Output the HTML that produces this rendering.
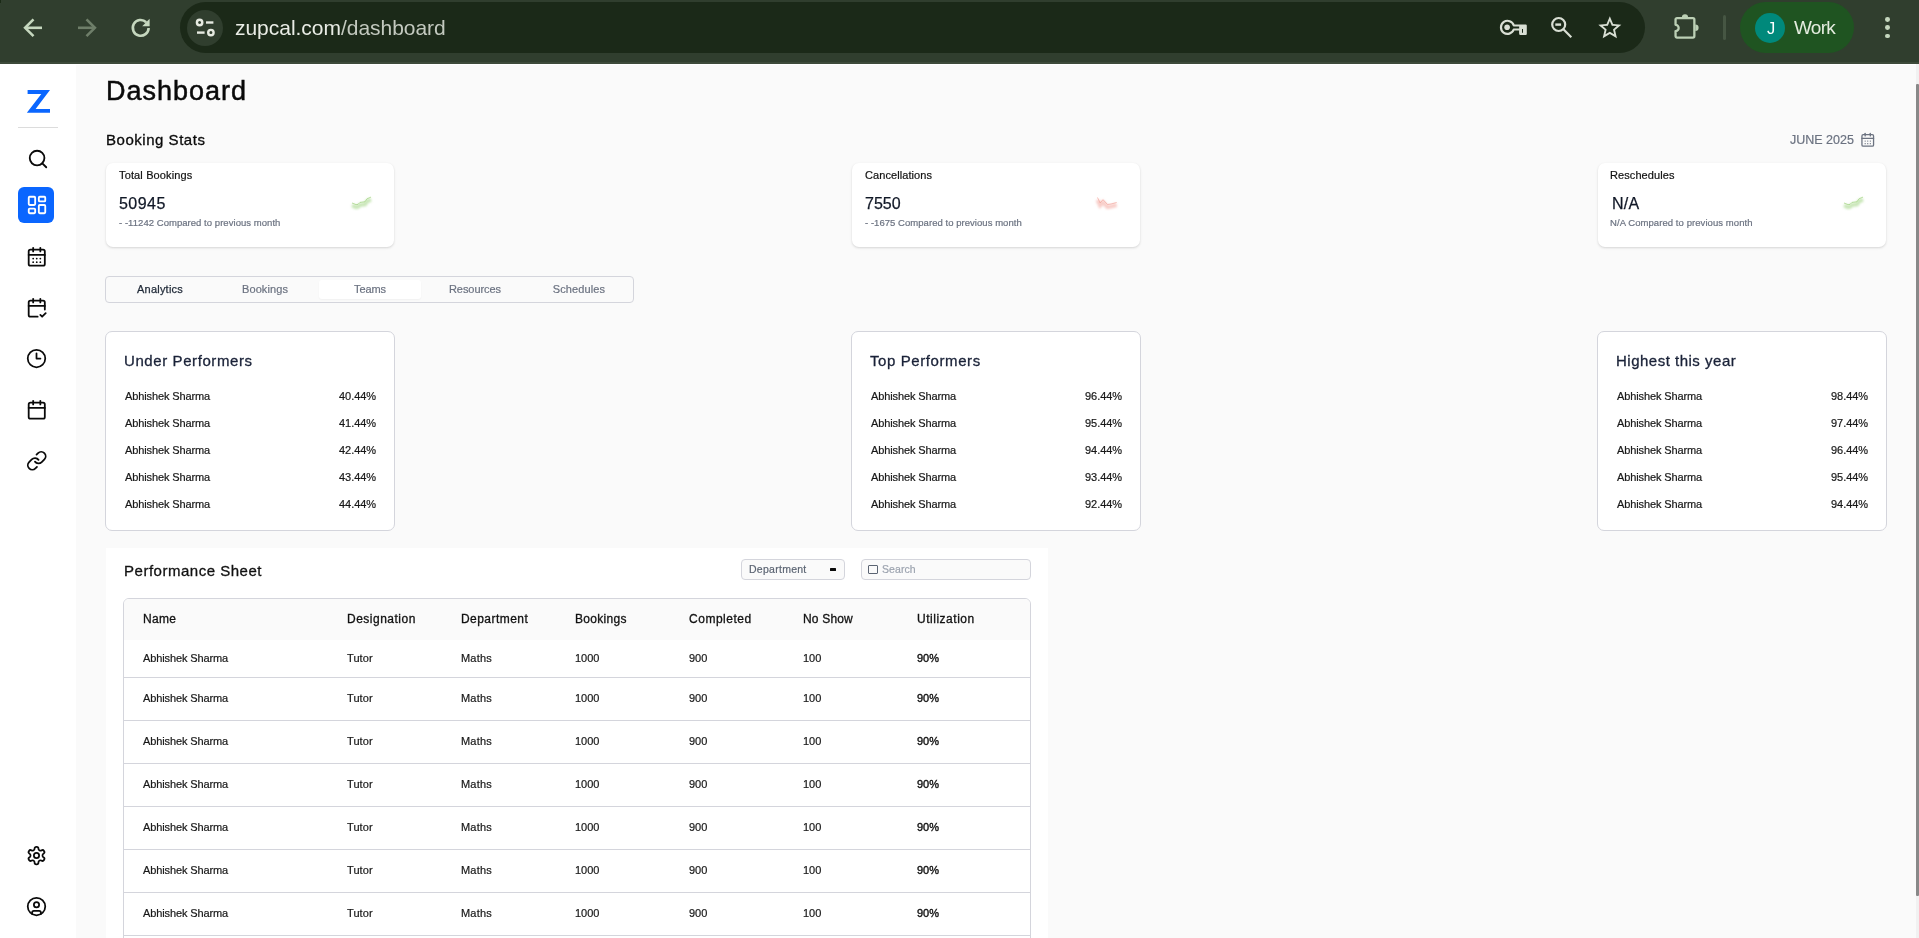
<!DOCTYPE html>
<html><head><meta charset="utf-8"><title>Dashboard</title>
<style>
html,body{margin:0;padding:0;}
body{width:1919px;height:938px;overflow:hidden;position:relative;background:#fafafa;font-family:"Liberation Sans",sans-serif;}
.b{position:absolute;box-sizing:border-box;}
.t{position:absolute;white-space:pre;font-family:"Liberation Sans",sans-serif;will-change:transform;}
</style></head><body>
<div class="b" style="left:0px;top:0px;width:1919px;height:64px;background:#303e2e"></div>
<div class="b" style="left:0px;top:62px;width:1919px;height:2px;background:#3d4a3a"></div>
<div class="b" style="left:0px;top:0px;width:1px;height:3px;background:#1a2a16"></div>
<div class="b" style="left:180px;top:2px;width:1465px;height:50.5px;background:#1b2918;border-radius:26px"></div>
<div class="b" style="left:187.4px;top:9.6px;width:36px;height:36px;background:#303e2e;border-radius:50%"></div>
<svg class="b" style="left:0;top:0" width="1919" height="64" viewBox="0 0 1919 64" fill="none" stroke-linecap="round" stroke-linejoin="round">
<!-- back -->
<g stroke="#c5d7be" stroke-width="2.6" stroke-linecap="butt" stroke-linejoin="miter">
<path d="M42 27.8H26.4"/><path d="M33.5 19.4L25.1 27.8L33.5 36.2"/>
</g>
<!-- forward -->
<g stroke="#6e7e69" stroke-width="2.6" stroke-linecap="butt" stroke-linejoin="miter">
<path d="M78 27.8H93.6"/><path d="M86.5 19.4L94.9 27.8L86.5 36.2"/>
</g>
<!-- reload -->
<g stroke="#c5d7be" stroke-width="2.6" stroke-linecap="butt">
<path d="M148.6 27.9A7.9 7.9 0 1 1 146.2 22.2"/>
</g>
<path d="M149.6 18.8V26.2H142.2Z" fill="#c5d7be"/>
<!-- site info (tune) -->
<g stroke="#e6eae1" stroke-width="2.4">
<circle cx="199.6" cy="22.5" r="2.7"/><path d="M206 22.5H213.4" stroke-linecap="butt"/>
<path d="M197 32.6H204.6" stroke-linecap="butt"/><circle cx="210.9" cy="32.6" r="2.7"/>
</g>
</svg>
<div class="t" style="left:235.00px;top:12px;font-size:21px;line-height:31px;color:#e9ece5;letter-spacing:-0.03px;"><span style="color:#e9ece5">zupcal.com</span><span style="color:#c3c9bf">/dashboard</span></div>
<svg class="b" style="left:0;top:0" width="1919" height="64" viewBox="0 0 1919 64" fill="none" stroke="#d9dfd4" stroke-width="2.2">
<!-- key -->
<path d="M1513.8 25.5H1525.7V33.9H1520.3V29.5H1513.7A6.55 6.55 0 1 1 1513.8 25.5Z" stroke-linejoin="round"/>
<rect x="1523" y="26" width="2.7" height="7.5" fill="#d9dfd4" stroke="none"/>
<rect x="1519.4" y="26" width="2.6" height="7.5" fill="#d9dfd4" stroke="none"/>
<rect x="1519.4" y="26" width="6" height="3" fill="#d9dfd4" stroke="none"/>
<circle cx="1507.1" cy="27.3" r="2.8" fill="#d9dfd4" stroke="none"/>
<!-- zoom out -->
<circle cx="1558.7" cy="24.5" r="6.5"/><path d="M1563.4 29.3L1571.3 37.2"/><path d="M1555.3 24.6H1561.1" stroke-width="2.4"/>
</svg>
<svg class="b" style="left:1595.7px;top:13.7px" width="27.65" height="27.65" viewBox="0 0 24 24" fill="#d9dfd4"><path d="M22 9.24l-7.19-.62L12 2 9.19 8.63 2 9.24l5.46 4.73L5.82 21 12 17.27 18.18 21l-1.63-7.03L22 9.24zM12 15.4l-3.76 2.27 1-4.28-3.32-2.88 4.38-.38L12 6.1l1.71 4.04 4.38.38-3.32 2.88 1 4.28L12 15.4z"/></svg>
<svg class="b" style="left:0;top:0" width="1919" height="64" viewBox="0 0 1919 64" fill="none" stroke="#bcd0b5" stroke-width="2.3" stroke-linejoin="round">
<path d="M1677 18.15H1692.9A1.45 1.45 0 0 1 1694.35 19.6V36.1A1.45 1.45 0 0 1 1692.9 37.55H1677A1.45 1.45 0 0 1 1675.55 36.1V31.05A3.1 3.1 0 0 0 1675.55 24.85V19.6A1.45 1.45 0 0 1 1677 18.15Z"/>
<path d="M1681.9 17.4A3.1 3.1 0 0 1 1688.1 17.4Z" fill="#bcd0b5" stroke="none"/>
<path d="M1695.3 24.5A3.3 3.3 0 0 1 1695.3 31.1Z" fill="#bcd0b5" stroke="none"/>
</svg>
<div class="b" style="left:1723.3px;top:15.2px;width:3.2px;height:24.6px;background:#465643;border-radius:2px"></div>
<div class="b" style="left:1740px;top:2px;width:114px;height:50.6px;background:#1f5421;border-radius:26px"></div>
<div class="b" style="left:1755px;top:12.8px;width:30px;height:30px;background:#00897b;border-radius:50%"></div>
<div class="t" style="left:1620.60px;width:300px;text-align:center;top:15px;font-size:16.5px;line-height:26px;color:#ffffff;">J</div>
<div class="t" style="left:1794.20px;top:13px;font-size:19px;line-height:29px;color:#e4ecdf;letter-spacing:-0.75px;">Work</div>
<div class="b" style="left:1885.1px;top:17.3px;width:4.8px;height:4.8px;background:#c5d7be;border-radius:50%"></div>
<div class="b" style="left:1885.1px;top:25.400000000000002px;width:4.8px;height:4.8px;background:#c5d7be;border-radius:50%"></div>
<div class="b" style="left:1885.1px;top:33.5px;width:4.8px;height:4.8px;background:#c5d7be;border-radius:50%"></div>
<div class="b" style="left:0px;top:64px;width:76px;height:874px;background:#ffffff"></div>
<div class="b" style="left:76px;top:64px;width:1843px;height:1px;background:#ffffff"></div>
<svg class="b" style="left:0;top:64px" width="76" height="80" viewBox="0 64 76 80"><polygon points="27.6,90.1 50,90.1 35.6,109 50,109 50,112.8 26.85,112.8 41.3,94.1 27.6,94.1" fill="#0a66ff"/></svg>
<div class="b" style="left:18px;top:127px;width:40px;height:1px;background:#dcdcdc"></div>
<svg class="b" style="left:27.40px;top:148.00px" width="22" height="22" viewBox="0 0 24 24" fill="none" stroke="#0a0a0a" stroke-width="2" stroke-linecap="round" stroke-linejoin="round"><circle cx="11" cy="11" r="8"/><path d="m21 21-4.3-4.3"/></svg>
<div class="b" style="left:18px;top:187.4px;width:36px;height:35.4px;background:#0a66ff;border-radius:6px"></div>
<svg class="b" style="left:25.70px;top:194.30px" width="22" height="22" viewBox="0 0 24 24" fill="none" stroke="#ffffff" stroke-width="2" stroke-linecap="round" stroke-linejoin="round"><rect width="7" height="9" x="3" y="3" rx="1"/><rect width="7" height="5" x="14" y="3" rx="1"/><rect width="7" height="9" x="14" y="12" rx="1"/><rect width="7" height="5" x="3" y="16" rx="1"/></svg>
<svg class="b" style="left:25.75px;top:246.05px" width="21.5" height="21.5" viewBox="0 0 24 24" fill="none" stroke="#0a0a0a" stroke-width="2" stroke-linecap="round" stroke-linejoin="round"><path d="M8 2v4"/><path d="M16 2v4"/><rect width="18" height="18" x="3" y="4" rx="2"/><path d="M3 10h18"/><path d="M8 14h.01"/><path d="M12 14h.01"/><path d="M16 14h.01"/><path d="M8 18h.01"/><path d="M12 18h.01"/><path d="M16 18h.01"/></svg>
<svg class="b" style="left:25.85px;top:297.15px" width="21.5" height="21.5" viewBox="0 0 24 24" fill="none" stroke="#0a0a0a" stroke-width="2" stroke-linecap="round" stroke-linejoin="round"><path d="M8 2v4"/><path d="M16 2v4"/><path d="M21 14V6a2 2 0 0 0-2-2H5a2 2 0 0 0-2 2v14a2 2 0 0 0 2 2h8"/><path d="M3 10h18"/><path d="m16 20 2 2 4-4"/></svg>
<svg class="b" style="left:25.90px;top:347.80px" width="21" height="21" viewBox="0 0 24 24" fill="none" stroke="#0a0a0a" stroke-width="2" stroke-linecap="round" stroke-linejoin="round"><circle cx="12" cy="12" r="10"/><polyline points="12 6 12 12 16.5 12"/></svg>
<svg class="b" style="left:25.75px;top:398.95px" width="21.5" height="21.5" viewBox="0 0 24 24" fill="none" stroke="#0a0a0a" stroke-width="2" stroke-linecap="round" stroke-linejoin="round"><path d="M8 2v4"/><path d="M16 2v4"/><rect width="18" height="18" x="3" y="4" rx="2"/><path d="M3 10h18"/></svg>
<svg class="b" style="left:25.85px;top:449.85px" width="21.5" height="21.5" viewBox="0 0 24 24" fill="none" stroke="#0a0a0a" stroke-width="2" stroke-linecap="round" stroke-linejoin="round"><path d="M10 13a5 5 0 0 0 7.54.54l3-3a5 5 0 0 0-7.07-7.07l-1.72 1.71"/><path d="M14 11a5 5 0 0 0-7.54-.54l-3 3a5 5 0 0 0 7.07 7.07l1.71-1.71"/></svg>
<svg class="b" style="left:25.90px;top:845.00px" width="21" height="21" viewBox="0 0 24 24" fill="none" stroke="#0a0a0a" stroke-width="2" stroke-linecap="round" stroke-linejoin="round"><path d="M12.22 2h-.44a2 2 0 0 0-2 2v.18a2 2 0 0 1-1 1.73l-.43.25a2 2 0 0 1-2 0l-.15-.08a2 2 0 0 0-2.73.73l-.22.38a2 2 0 0 0 .73 2.73l.15.1a2 2 0 0 1 1 1.72v.51a2 2 0 0 1-1 1.74l-.15.09a2 2 0 0 0-.73 2.73l.22.38a2 2 0 0 0 2.73.73l.15-.08a2 2 0 0 1 2 0l.43.25a2 2 0 0 1 1 1.73V20a2 2 0 0 0 2 2h.44a2 2 0 0 0 2-2v-.18a2 2 0 0 1 1-1.73l.43-.25a2 2 0 0 1 2 0l.15.08a2 2 0 0 0 2.73-.73l.22-.39a2 2 0 0 0-.73-2.73l-.15-.08a2 2 0 0 1-1-1.74v-.5a2 2 0 0 1 1-1.74l.15-.09a2 2 0 0 0 .73-2.73l-.22-.38a2 2 0 0 0-2.73-.73l-.15.08a2 2 0 0 1-2 0l-.43-.25a2 2 0 0 1-1-1.73V4a2 2 0 0 0-2-2z"/><circle cx="12" cy="12" r="3"/></svg>
<svg class="b" style="left:26.00px;top:895.90px" width="21" height="21" viewBox="0 0 24 24" fill="none" stroke="#0a0a0a" stroke-width="2" stroke-linecap="round" stroke-linejoin="round"><circle cx="12" cy="12" r="10"/><circle cx="12" cy="10" r="3"/><path d="M7 20.662V19a2 2 0 0 1 2-2h6a2 2 0 0 1 2 2v1.662"/></svg>
<div class="t" style="left:106.20px;top:72px;font-size:27px;line-height:38px;color:#0a0a0a;letter-spacing:1.0px;-webkit-text-stroke:0.5px #0a0a0a;">Dashboard</div>
<div class="t" style="left:106.30px;top:127px;font-size:15px;line-height:25px;color:#0a0a0a;letter-spacing:0.53px;-webkit-text-stroke:0.3px #0a0a0a;">Booking Stats</div>
<div class="t" style="left:1790.00px;top:129px;font-size:12.5px;line-height:22px;color:#6b7280;-webkit-text-stroke:0.2px #6b7280;">JUNE 2025</div>
<svg class="b" style="left:1859.55px;top:131.55px" width="15.5" height="15.5" viewBox="0 0 24 24" fill="none" stroke="#6b7280" stroke-width="2" stroke-linecap="round" stroke-linejoin="round"><path d="M8 2v4"/><path d="M16 2v4"/><rect width="18" height="18" x="3" y="4" rx="2"/><path d="M3 10h18"/><path d="M8 14h.01"/><path d="M12 14h.01"/><path d="M16 14h.01"/><path d="M8 18h.01"/><path d="M12 18h.01"/><path d="M16 18h.01"/></svg>
<div class="b" style="left:106px;top:163px;width:288px;height:84px;background:#fff;border-radius:7px;box-shadow:0 1px 3px rgba(0,0,0,0.10),0 1px 2px rgba(0,0,0,0.06)"></div>
<div class="t" style="left:118.60px;top:165px;font-size:11px;line-height:20px;color:#111;letter-spacing:0.14px;-webkit-text-stroke:0.2px #111;">Total Bookings</div>
<div class="t" style="left:118.60px;top:191px;font-size:16px;line-height:25px;color:#111827;letter-spacing:0.45px;-webkit-text-stroke:0.25px #111827;">50945</div>
<div class="t" style="left:118.60px;top:213px;font-size:9.5px;line-height:19px;color:#6b7280;letter-spacing:0.045px;-webkit-text-stroke:0.2px #6b7280;">- -11242 Compared to previous month</div>
<div class="b" style="left:852px;top:163px;width:288px;height:84px;background:#fff;border-radius:7px;box-shadow:0 1px 3px rgba(0,0,0,0.10),0 1px 2px rgba(0,0,0,0.06)"></div>
<div class="t" style="left:864.60px;top:165px;font-size:11px;line-height:20px;color:#111;letter-spacing:0.08px;-webkit-text-stroke:0.2px #111;">Cancellations</div>
<div class="t" style="left:864.60px;top:191px;font-size:16px;line-height:25px;color:#111827;-webkit-text-stroke:0.25px #111827;">7550</div>
<div class="t" style="left:864.60px;top:213px;font-size:9.5px;line-height:19px;color:#6b7280;letter-spacing:0.045px;-webkit-text-stroke:0.2px #6b7280;">- -1675 Compared to previous month</div>
<div class="b" style="left:1598px;top:163px;width:288px;height:84px;background:#fff;border-radius:7px;box-shadow:0 1px 3px rgba(0,0,0,0.10),0 1px 2px rgba(0,0,0,0.06)"></div>
<div class="t" style="left:1610.20px;top:165px;font-size:11px;line-height:20px;color:#111;letter-spacing:0.08px;-webkit-text-stroke:0.2px #111;">Reschedules</div>
<div class="t" style="left:1612.40px;top:191px;font-size:16px;line-height:25px;color:#111827;letter-spacing:0.2px;-webkit-text-stroke:0.25px #111827;">N/A</div>
<div class="t" style="left:1609.90px;top:213px;font-size:9.5px;line-height:19px;color:#6b7280;letter-spacing:0.07px;-webkit-text-stroke:0.2px #6b7280;">N/A Compared to previous month</div>
<svg class="b" style="left:342px;top:188px;overflow:visible" width="50" height="40" viewBox="342 188 50 40"><defs><filter id="bl352" x="-50%" y="-50%" width="200%" height="200%"><feGaussianBlur stdDeviation="1.3"/></filter></defs><polyline points="352.0,203.0 356.0,204.6 358.0,204.4 360.0,202.4 365.0,201.8 367.0,198.8 371.0,197.1" fill="none" stroke="#9fd37f" stroke-width="4" stroke-opacity="0.55" filter="url(#bl352)" transform="translate(0,2.5)"/><polyline points="352.0,203.0 356.0,204.6 358.0,204.4 360.0,202.4 365.0,201.8 367.0,198.8 371.0,197.1" fill="none" stroke="#9fd37f" stroke-width="1" stroke-opacity="0.7"/></svg>
<svg class="b" style="left:1088px;top:186px;overflow:visible" width="50" height="40" viewBox="1088 186 50 40"><defs><filter id="bl1098" x="-50%" y="-50%" width="200%" height="200%"><feGaussianBlur stdDeviation="1.3"/></filter></defs><polyline points="1097.5,197.5 1100.1,203.0 1103.0,199.7 1107.5,204.5 1111.0,204.0 1116.7,202.5" fill="none" stroke="#f2a59d" stroke-width="4" stroke-opacity="0.55" filter="url(#bl1098)" transform="translate(0,2.5)"/><polyline points="1097.5,197.5 1100.1,203.0 1103.0,199.7 1107.5,204.5 1111.0,204.0 1116.7,202.5" fill="none" stroke="#f2a59d" stroke-width="1" stroke-opacity="0.7"/></svg>
<svg class="b" style="left:1834px;top:188px;overflow:visible" width="50" height="40" viewBox="1834 188 50 40"><defs><filter id="bl1844" x="-50%" y="-50%" width="200%" height="200%"><feGaussianBlur stdDeviation="1.3"/></filter></defs><polyline points="1844.0,203.0 1848.0,204.6 1850.0,204.4 1852.0,202.4 1857.0,201.8 1859.0,198.8 1863.0,197.1" fill="none" stroke="#9fd37f" stroke-width="4" stroke-opacity="0.55" filter="url(#bl1844)" transform="translate(0,2.5)"/><polyline points="1844.0,203.0 1848.0,204.6 1850.0,204.4 1852.0,202.4 1857.0,201.8 1859.0,198.8 1863.0,197.1" fill="none" stroke="#9fd37f" stroke-width="1" stroke-opacity="0.7"/></svg>
<div class="b" style="left:105px;top:276px;width:529px;height:27px;border:1px solid #d4d5dc;border-radius:4px;background:#fafafa"></div>
<div class="b" style="left:319px;top:280px;width:102px;height:19px;background:#fff;border-radius:3px;box-shadow:0 1px 2px rgba(0,0,0,0.04)"></div>
<div class="t" style="left:10.20px;width:300px;text-align:center;top:279px;font-size:11px;line-height:20px;color:#1f2937;letter-spacing:0.22px;-webkit-text-stroke:0.25px #1f2937;">Analytics</div>
<div class="t" style="left:114.90px;width:300px;text-align:center;top:279px;font-size:11px;line-height:20px;color:#6b7280;letter-spacing:0.09px;-webkit-text-stroke:0.2px #6b7280;">Bookings</div>
<div class="t" style="left:220.00px;width:300px;text-align:center;top:279px;font-size:11px;line-height:20px;color:#6b7280;letter-spacing:-0.08px;-webkit-text-stroke:0.2px #6b7280;">Teams</div>
<div class="t" style="left:324.70px;width:300px;text-align:center;top:279px;font-size:11px;line-height:20px;color:#6b7280;letter-spacing:-0.06px;-webkit-text-stroke:0.2px #6b7280;">Resources</div>
<div class="t" style="left:429.40px;width:300px;text-align:center;top:279px;font-size:11px;line-height:20px;color:#6b7280;letter-spacing:0.12px;-webkit-text-stroke:0.2px #6b7280;">Schedules</div>
<div class="b" style="left:105px;top:331px;width:290px;height:200px;border:1px solid #d4d5dc;border-radius:7px;background:#fff"></div>
<div class="t" style="left:123.70px;top:348px;font-size:15px;line-height:25px;color:#1a2238;letter-spacing:0.59px;-webkit-text-stroke:0.3px #1a2238;">Under Performers</div>
<div class="t" style="left:124.50px;top:386px;font-size:11px;line-height:20px;color:#171717;letter-spacing:-0.12px;-webkit-text-stroke:0.2px #171717;">Abhishek Sharma</div>
<div class="t" style="right:1543.20px;top:386px;font-size:11px;line-height:20px;color:#171717;letter-spacing:-0.05px;-webkit-text-stroke:0.2px #171717;">40.44%</div>
<div class="t" style="left:124.50px;top:413px;font-size:11px;line-height:20px;color:#171717;letter-spacing:-0.12px;-webkit-text-stroke:0.2px #171717;">Abhishek Sharma</div>
<div class="t" style="right:1543.20px;top:413px;font-size:11px;line-height:20px;color:#171717;letter-spacing:-0.05px;-webkit-text-stroke:0.2px #171717;">41.44%</div>
<div class="t" style="left:124.50px;top:440px;font-size:11px;line-height:20px;color:#171717;letter-spacing:-0.12px;-webkit-text-stroke:0.2px #171717;">Abhishek Sharma</div>
<div class="t" style="right:1543.20px;top:440px;font-size:11px;line-height:20px;color:#171717;letter-spacing:-0.05px;-webkit-text-stroke:0.2px #171717;">42.44%</div>
<div class="t" style="left:124.50px;top:467px;font-size:11px;line-height:20px;color:#171717;letter-spacing:-0.12px;-webkit-text-stroke:0.2px #171717;">Abhishek Sharma</div>
<div class="t" style="right:1543.20px;top:467px;font-size:11px;line-height:20px;color:#171717;letter-spacing:-0.05px;-webkit-text-stroke:0.2px #171717;">43.44%</div>
<div class="t" style="left:124.50px;top:494px;font-size:11px;line-height:20px;color:#171717;letter-spacing:-0.12px;-webkit-text-stroke:0.2px #171717;">Abhishek Sharma</div>
<div class="t" style="right:1543.20px;top:494px;font-size:11px;line-height:20px;color:#171717;letter-spacing:-0.05px;-webkit-text-stroke:0.2px #171717;">44.44%</div>
<div class="b" style="left:851px;top:331px;width:290px;height:200px;border:1px solid #d4d5dc;border-radius:7px;background:#fff"></div>
<div class="t" style="left:869.70px;top:348px;font-size:15px;line-height:25px;color:#1a2238;letter-spacing:0.59px;-webkit-text-stroke:0.3px #1a2238;">Top Performers</div>
<div class="t" style="left:870.50px;top:386px;font-size:11px;line-height:20px;color:#171717;letter-spacing:-0.12px;-webkit-text-stroke:0.2px #171717;">Abhishek Sharma</div>
<div class="t" style="right:797.20px;top:386px;font-size:11px;line-height:20px;color:#171717;letter-spacing:-0.05px;-webkit-text-stroke:0.2px #171717;">96.44%</div>
<div class="t" style="left:870.50px;top:413px;font-size:11px;line-height:20px;color:#171717;letter-spacing:-0.12px;-webkit-text-stroke:0.2px #171717;">Abhishek Sharma</div>
<div class="t" style="right:797.20px;top:413px;font-size:11px;line-height:20px;color:#171717;letter-spacing:-0.05px;-webkit-text-stroke:0.2px #171717;">95.44%</div>
<div class="t" style="left:870.50px;top:440px;font-size:11px;line-height:20px;color:#171717;letter-spacing:-0.12px;-webkit-text-stroke:0.2px #171717;">Abhishek Sharma</div>
<div class="t" style="right:797.20px;top:440px;font-size:11px;line-height:20px;color:#171717;letter-spacing:-0.05px;-webkit-text-stroke:0.2px #171717;">94.44%</div>
<div class="t" style="left:870.50px;top:467px;font-size:11px;line-height:20px;color:#171717;letter-spacing:-0.12px;-webkit-text-stroke:0.2px #171717;">Abhishek Sharma</div>
<div class="t" style="right:797.20px;top:467px;font-size:11px;line-height:20px;color:#171717;letter-spacing:-0.05px;-webkit-text-stroke:0.2px #171717;">93.44%</div>
<div class="t" style="left:870.50px;top:494px;font-size:11px;line-height:20px;color:#171717;letter-spacing:-0.12px;-webkit-text-stroke:0.2px #171717;">Abhishek Sharma</div>
<div class="t" style="right:797.20px;top:494px;font-size:11px;line-height:20px;color:#171717;letter-spacing:-0.05px;-webkit-text-stroke:0.2px #171717;">92.44%</div>
<div class="b" style="left:1597px;top:331px;width:290px;height:200px;border:1px solid #d4d5dc;border-radius:7px;background:#fff"></div>
<div class="t" style="left:1615.70px;top:348px;font-size:15px;line-height:25px;color:#1a2238;letter-spacing:0.5px;-webkit-text-stroke:0.3px #1a2238;">Highest this year</div>
<div class="t" style="left:1616.50px;top:386px;font-size:11px;line-height:20px;color:#171717;letter-spacing:-0.12px;-webkit-text-stroke:0.2px #171717;">Abhishek Sharma</div>
<div class="t" style="right:51.20px;top:386px;font-size:11px;line-height:20px;color:#171717;letter-spacing:-0.05px;-webkit-text-stroke:0.2px #171717;">98.44%</div>
<div class="t" style="left:1616.50px;top:413px;font-size:11px;line-height:20px;color:#171717;letter-spacing:-0.12px;-webkit-text-stroke:0.2px #171717;">Abhishek Sharma</div>
<div class="t" style="right:51.20px;top:413px;font-size:11px;line-height:20px;color:#171717;letter-spacing:-0.05px;-webkit-text-stroke:0.2px #171717;">97.44%</div>
<div class="t" style="left:1616.50px;top:440px;font-size:11px;line-height:20px;color:#171717;letter-spacing:-0.12px;-webkit-text-stroke:0.2px #171717;">Abhishek Sharma</div>
<div class="t" style="right:51.20px;top:440px;font-size:11px;line-height:20px;color:#171717;letter-spacing:-0.05px;-webkit-text-stroke:0.2px #171717;">96.44%</div>
<div class="t" style="left:1616.50px;top:467px;font-size:11px;line-height:20px;color:#171717;letter-spacing:-0.12px;-webkit-text-stroke:0.2px #171717;">Abhishek Sharma</div>
<div class="t" style="right:51.20px;top:467px;font-size:11px;line-height:20px;color:#171717;letter-spacing:-0.05px;-webkit-text-stroke:0.2px #171717;">95.44%</div>
<div class="t" style="left:1616.50px;top:494px;font-size:11px;line-height:20px;color:#171717;letter-spacing:-0.12px;-webkit-text-stroke:0.2px #171717;">Abhishek Sharma</div>
<div class="t" style="right:51.20px;top:494px;font-size:11px;line-height:20px;color:#171717;letter-spacing:-0.05px;-webkit-text-stroke:0.2px #171717;">94.44%</div>
<div class="b" style="left:106px;top:548px;width:942px;height:400px;background:#fff"></div>
<div class="t" style="left:124.20px;top:558px;font-size:15px;line-height:25px;color:#111;letter-spacing:0.515px;-webkit-text-stroke:0.3px #111;">Performance Sheet</div>
<div class="b" style="left:741px;top:559px;width:104px;height:21px;border:1px solid #d4d5dc;border-radius:4px;background:#fafafa"></div>
<div class="t" style="left:748.60px;top:559px;font-size:10.5px;line-height:20px;color:#5b6472;letter-spacing:0.27px;-webkit-text-stroke:0.2px #5b6472;">Department</div>
<div class="b" style="left:830.2px;top:568.4px;width:5.8px;height:2.8px;background:#0a0a0a;border-radius:0.5px"></div>
<div class="b" style="left:861px;top:559px;width:170px;height:21px;border:1px solid #d4d5dc;border-radius:4px;background:#fafafa"></div>
<div class="b" style="left:868.2px;top:565px;width:9.4px;height:8.8px;border:1px solid #5b6472;border-radius:1px"></div>
<div class="t" style="left:881.60px;top:559px;font-size:10.5px;line-height:20px;color:#9ca3af;letter-spacing:0.07px;-webkit-text-stroke:0.2px #9ca3af;">Search</div>
<div class="b" style="left:123px;top:598px;width:908px;height:360px;border:1px solid #d4d5dc;border-radius:6px;background:#fff;overflow:hidden"></div>
<div class="b" style="left:124px;top:599px;width:906px;height:40.5px;background:#fafafa;border-radius:5px 5px 0 0"></div>
<div class="t" style="left:142.70px;top:608px;font-size:12px;line-height:22px;color:#111;letter-spacing:0.3px;-webkit-text-stroke:0.3px #111;">Name</div>
<div class="t" style="left:346.70px;top:608px;font-size:12px;line-height:22px;color:#111;letter-spacing:0.5px;-webkit-text-stroke:0.3px #111;">Designation</div>
<div class="t" style="left:460.70px;top:608px;font-size:12px;line-height:22px;color:#111;letter-spacing:0.45px;-webkit-text-stroke:0.3px #111;">Department</div>
<div class="t" style="left:574.70px;top:608px;font-size:12px;line-height:22px;color:#111;letter-spacing:0.3px;-webkit-text-stroke:0.3px #111;">Bookings</div>
<div class="t" style="left:688.70px;top:608px;font-size:12px;line-height:22px;color:#111;letter-spacing:0.52px;-webkit-text-stroke:0.3px #111;">Completed</div>
<div class="t" style="left:802.70px;top:608px;font-size:12px;line-height:22px;color:#111;letter-spacing:0.18px;-webkit-text-stroke:0.3px #111;">No Show</div>
<div class="t" style="left:916.70px;top:608px;font-size:12px;line-height:22px;color:#111;letter-spacing:0.52px;-webkit-text-stroke:0.3px #111;">Utilization</div>
<div class="t" style="left:142.70px;top:648px;font-size:11px;line-height:20px;color:#171717;letter-spacing:-0.12px;-webkit-text-stroke:0.2px #171717;">Abhishek Sharma</div>
<div class="t" style="left:346.70px;top:648px;font-size:11px;line-height:20px;color:#171717;letter-spacing:0.07px;-webkit-text-stroke:0.2px #171717;">Tutor</div>
<div class="t" style="left:460.70px;top:648px;font-size:11px;line-height:20px;color:#171717;letter-spacing:0.2px;-webkit-text-stroke:0.2px #171717;">Maths</div>
<div class="t" style="left:574.70px;top:648px;font-size:11px;line-height:20px;color:#171717;-webkit-text-stroke:0.2px #171717;">1000</div>
<div class="t" style="left:688.70px;top:648px;font-size:11px;line-height:20px;color:#171717;-webkit-text-stroke:0.2px #171717;">900</div>
<div class="t" style="left:802.70px;top:648px;font-size:11px;line-height:20px;color:#171717;-webkit-text-stroke:0.2px #171717;">100</div>
<div class="t" style="left:916.70px;top:648px;font-size:11px;line-height:20px;color:#111;-webkit-text-stroke:0.38px #111;">90%</div>
<div class="t" style="left:142.70px;top:688px;font-size:11px;line-height:20px;color:#171717;letter-spacing:-0.12px;-webkit-text-stroke:0.2px #171717;">Abhishek Sharma</div>
<div class="t" style="left:346.70px;top:688px;font-size:11px;line-height:20px;color:#171717;letter-spacing:0.07px;-webkit-text-stroke:0.2px #171717;">Tutor</div>
<div class="t" style="left:460.70px;top:688px;font-size:11px;line-height:20px;color:#171717;letter-spacing:0.2px;-webkit-text-stroke:0.2px #171717;">Maths</div>
<div class="t" style="left:574.70px;top:688px;font-size:11px;line-height:20px;color:#171717;-webkit-text-stroke:0.2px #171717;">1000</div>
<div class="t" style="left:688.70px;top:688px;font-size:11px;line-height:20px;color:#171717;-webkit-text-stroke:0.2px #171717;">900</div>
<div class="t" style="left:802.70px;top:688px;font-size:11px;line-height:20px;color:#171717;-webkit-text-stroke:0.2px #171717;">100</div>
<div class="t" style="left:916.70px;top:688px;font-size:11px;line-height:20px;color:#111;-webkit-text-stroke:0.38px #111;">90%</div>
<div class="t" style="left:142.70px;top:731px;font-size:11px;line-height:20px;color:#171717;letter-spacing:-0.12px;-webkit-text-stroke:0.2px #171717;">Abhishek Sharma</div>
<div class="t" style="left:346.70px;top:731px;font-size:11px;line-height:20px;color:#171717;letter-spacing:0.07px;-webkit-text-stroke:0.2px #171717;">Tutor</div>
<div class="t" style="left:460.70px;top:731px;font-size:11px;line-height:20px;color:#171717;letter-spacing:0.2px;-webkit-text-stroke:0.2px #171717;">Maths</div>
<div class="t" style="left:574.70px;top:731px;font-size:11px;line-height:20px;color:#171717;-webkit-text-stroke:0.2px #171717;">1000</div>
<div class="t" style="left:688.70px;top:731px;font-size:11px;line-height:20px;color:#171717;-webkit-text-stroke:0.2px #171717;">900</div>
<div class="t" style="left:802.70px;top:731px;font-size:11px;line-height:20px;color:#171717;-webkit-text-stroke:0.2px #171717;">100</div>
<div class="t" style="left:916.70px;top:731px;font-size:11px;line-height:20px;color:#111;-webkit-text-stroke:0.38px #111;">90%</div>
<div class="t" style="left:142.70px;top:774px;font-size:11px;line-height:20px;color:#171717;letter-spacing:-0.12px;-webkit-text-stroke:0.2px #171717;">Abhishek Sharma</div>
<div class="t" style="left:346.70px;top:774px;font-size:11px;line-height:20px;color:#171717;letter-spacing:0.07px;-webkit-text-stroke:0.2px #171717;">Tutor</div>
<div class="t" style="left:460.70px;top:774px;font-size:11px;line-height:20px;color:#171717;letter-spacing:0.2px;-webkit-text-stroke:0.2px #171717;">Maths</div>
<div class="t" style="left:574.70px;top:774px;font-size:11px;line-height:20px;color:#171717;-webkit-text-stroke:0.2px #171717;">1000</div>
<div class="t" style="left:688.70px;top:774px;font-size:11px;line-height:20px;color:#171717;-webkit-text-stroke:0.2px #171717;">900</div>
<div class="t" style="left:802.70px;top:774px;font-size:11px;line-height:20px;color:#171717;-webkit-text-stroke:0.2px #171717;">100</div>
<div class="t" style="left:916.70px;top:774px;font-size:11px;line-height:20px;color:#111;-webkit-text-stroke:0.38px #111;">90%</div>
<div class="t" style="left:142.70px;top:817px;font-size:11px;line-height:20px;color:#171717;letter-spacing:-0.12px;-webkit-text-stroke:0.2px #171717;">Abhishek Sharma</div>
<div class="t" style="left:346.70px;top:817px;font-size:11px;line-height:20px;color:#171717;letter-spacing:0.07px;-webkit-text-stroke:0.2px #171717;">Tutor</div>
<div class="t" style="left:460.70px;top:817px;font-size:11px;line-height:20px;color:#171717;letter-spacing:0.2px;-webkit-text-stroke:0.2px #171717;">Maths</div>
<div class="t" style="left:574.70px;top:817px;font-size:11px;line-height:20px;color:#171717;-webkit-text-stroke:0.2px #171717;">1000</div>
<div class="t" style="left:688.70px;top:817px;font-size:11px;line-height:20px;color:#171717;-webkit-text-stroke:0.2px #171717;">900</div>
<div class="t" style="left:802.70px;top:817px;font-size:11px;line-height:20px;color:#171717;-webkit-text-stroke:0.2px #171717;">100</div>
<div class="t" style="left:916.70px;top:817px;font-size:11px;line-height:20px;color:#111;-webkit-text-stroke:0.38px #111;">90%</div>
<div class="t" style="left:142.70px;top:860px;font-size:11px;line-height:20px;color:#171717;letter-spacing:-0.12px;-webkit-text-stroke:0.2px #171717;">Abhishek Sharma</div>
<div class="t" style="left:346.70px;top:860px;font-size:11px;line-height:20px;color:#171717;letter-spacing:0.07px;-webkit-text-stroke:0.2px #171717;">Tutor</div>
<div class="t" style="left:460.70px;top:860px;font-size:11px;line-height:20px;color:#171717;letter-spacing:0.2px;-webkit-text-stroke:0.2px #171717;">Maths</div>
<div class="t" style="left:574.70px;top:860px;font-size:11px;line-height:20px;color:#171717;-webkit-text-stroke:0.2px #171717;">1000</div>
<div class="t" style="left:688.70px;top:860px;font-size:11px;line-height:20px;color:#171717;-webkit-text-stroke:0.2px #171717;">900</div>
<div class="t" style="left:802.70px;top:860px;font-size:11px;line-height:20px;color:#171717;-webkit-text-stroke:0.2px #171717;">100</div>
<div class="t" style="left:916.70px;top:860px;font-size:11px;line-height:20px;color:#111;-webkit-text-stroke:0.38px #111;">90%</div>
<div class="t" style="left:142.70px;top:903px;font-size:11px;line-height:20px;color:#171717;letter-spacing:-0.12px;-webkit-text-stroke:0.2px #171717;">Abhishek Sharma</div>
<div class="t" style="left:346.70px;top:903px;font-size:11px;line-height:20px;color:#171717;letter-spacing:0.07px;-webkit-text-stroke:0.2px #171717;">Tutor</div>
<div class="t" style="left:460.70px;top:903px;font-size:11px;line-height:20px;color:#171717;letter-spacing:0.2px;-webkit-text-stroke:0.2px #171717;">Maths</div>
<div class="t" style="left:574.70px;top:903px;font-size:11px;line-height:20px;color:#171717;-webkit-text-stroke:0.2px #171717;">1000</div>
<div class="t" style="left:688.70px;top:903px;font-size:11px;line-height:20px;color:#171717;-webkit-text-stroke:0.2px #171717;">900</div>
<div class="t" style="left:802.70px;top:903px;font-size:11px;line-height:20px;color:#171717;-webkit-text-stroke:0.2px #171717;">100</div>
<div class="t" style="left:916.70px;top:903px;font-size:11px;line-height:20px;color:#111;-webkit-text-stroke:0.38px #111;">90%</div>
<div class="b" style="left:124px;top:677px;width:906px;height:1px;background:#d4d5dc"></div>
<div class="b" style="left:124px;top:720px;width:906px;height:1px;background:#d4d5dc"></div>
<div class="b" style="left:124px;top:763px;width:906px;height:1px;background:#d4d5dc"></div>
<div class="b" style="left:124px;top:806px;width:906px;height:1px;background:#d4d5dc"></div>
<div class="b" style="left:124px;top:849px;width:906px;height:1px;background:#d4d5dc"></div>
<div class="b" style="left:124px;top:892px;width:906px;height:1px;background:#d4d5dc"></div>
<div class="b" style="left:124px;top:935px;width:906px;height:1px;background:#d4d5dc"></div>
<div class="b" style="left:1915.6px;top:64px;width:3.4px;height:874px;background:#f1f1f1"></div>
<div class="b" style="left:1915.6px;top:84px;width:3.4px;height:812px;background:#888888;border-radius:1px"></div>
</body></html>
